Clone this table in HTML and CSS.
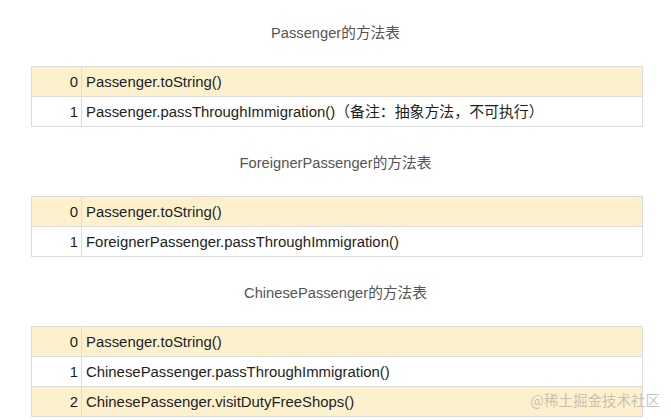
FILE: index.html
```html
<!DOCTYPE html>
<html>
<head>
<meta charset="utf-8">
<link rel="stylesheet" href="styles.css">
</head>
<body>
<div class="page">
  <section class="block">
    <div class="title">Passenger的方法表</div>
    <table class="vtable">
      <tr class="odd"><td class="idx">0</td><td class="m">Passenger.toString()</td></tr>
      <tr><td class="idx">1</td><td class="m">Passenger.passThroughImmigration()（备注：抽象方法，不可执行）</td></tr>
    </table>
  </section>
  <section class="block">
    <div class="title">ForeignerPassenger的方法表</div>
    <table class="vtable">
      <tr class="odd"><td class="idx">0</td><td class="m">Passenger.toString()</td></tr>
      <tr><td class="idx">1</td><td class="m">ForeignerPassenger.passThroughImmigration()</td></tr>
    </table>
  </section>
  <section class="block">
    <div class="title">ChinesePassenger的方法表</div>
    <table class="vtable">
      <tr class="odd"><td class="idx">0</td><td class="m">Passenger.toString()</td></tr>
      <tr><td class="idx">1</td><td class="m">ChinesePassenger.passThroughImmigration()</td></tr>
      <tr class="odd"><td class="idx">2</td><td class="m">ChinesePassenger.visitDutyFreeShops()</td></tr>
    </table>
  </section>
  <div class="watermark">@稀土掘金技术社区</div>
</div>
</body>
</html>
```

FILE: styles.css
```css
html, body {
  margin: 0;
  padding: 0;
  background: #fff;
}
body {
  width: 671px;
  height: 420px;
  overflow: hidden;
  font-family: "Liberation Sans", Arial, "Noto Sans CJK SC", sans-serif;
  color: #1e1e1e;
}
.page {
  position: relative;
  height: 420px;
  padding-top: 23px;
  box-sizing: border-box;
}
.block {
  display: flex;
  flex-direction: column;
  align-items: center;
  margin-bottom: 26px;
}
.title {
  font-size: 14.7px;
  line-height: 20px;
  color: #555;
  margin-bottom: 23px;
}
.vtable {
  width: 612px;
  margin-left: 31px;
  align-self: flex-start;
  border-collapse: collapse;
  font-size: 14.9px;
}
.vtable td {
  border: 1px solid #dcdcdc;
  height: 29px;
  padding: 0;
  line-height: 20px;
}
.vtable tr.odd td {
  background: #fdf1cd;
}
.vtable td.idx {
  width: 46px;
  text-align: right;
  padding-right: 3px;
}
.vtable td.m {
  padding-left: 4px;
}
.watermark {
  position: absolute;
  right: 11px;
  bottom: 10px;
  font-size: 14.5px;
  color: rgba(150, 150, 150, 0.55);
  font-family: "Noto Sans CJK SC", sans-serif;
}
```
